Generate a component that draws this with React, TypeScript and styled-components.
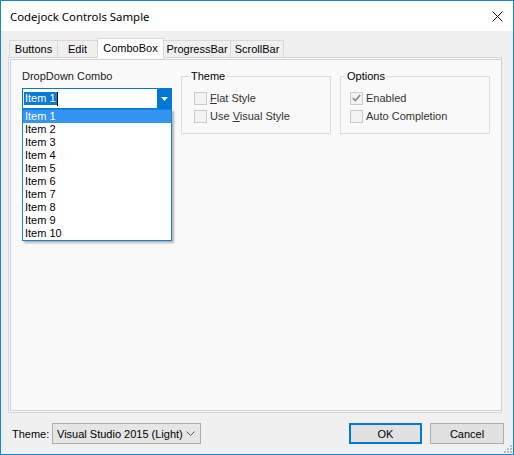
import styled, { createGlobalStyle } from "styled-components";

const GlobalStyle = createGlobalStyle`
  html, body {
    margin: 0;
    padding: 0;
    background: #ffffff;
  }
  body {
    font-family: "Liberation Sans", Arial, sans-serif;
    font-size: 11px;
    color: #000;
  }
  * {
    box-sizing: border-box;
  }
`;

const Window = styled.div`
  position: relative;
  width: 514px;
  height: 455px;
  border: 1px solid #1883d7;
  display: flex;
  flex-direction: column;
  background: #f0f0f0;
`;

const TitleBar = styled.div`
  height: 30px;
  background: #ffffff;
  display: flex;
  align-items: center;
  justify-content: space-between;
  padding: 0 10px 0 9px;
  font-family: "Noto Sans", "Open Sans", sans-serif;
  font-size: 11.4px;
  color: #000;
`;

const Body = styled.div`
  flex: 1;
  display: flex;
  flex-direction: column;
  padding: 7px 11px 10px 7px;
`;

const TabStrip = styled.div`
  height: 19px;
  display: flex;
  align-items: flex-end;
  padding-left: 1px;
`;

const Tab = styled.div<{ $w: number; $active?: boolean }>`
  position: relative;
  z-index: ${(p) => (p.$active ? 1 : 0)};
  width: ${(p) => p.$w}px;
  height: ${(p) => (p.$active ? 20 : 17)}px;
  margin-bottom: ${(p) => (p.$active ? -1 : 0)}px;
  margin-left: -1px;
  border: 1px solid #d9d9d9;
  border-bottom: none;
  background: ${(p) => (p.$active ? "#ffffff" : "#f0f0f0")};
  display: flex;
  align-items: center;
  justify-content: center;
  padding-bottom: ${(p) => (p.$active ? 2 : 0)}px;
  white-space: nowrap;

  &:first-child {
    margin-left: 0;
  }
`;

const Page = styled.div`
  height: 356px;
  border: 1px solid #d6d6d6;
  padding: 1px;
  background: #f9f9f9;
  display: flex;
`;

const PageInner = styled.div`
  flex: 1;
  border: 1px solid #d0d0d0;
  padding: 10px 11px;
  display: flex;
  align-items: flex-start;
  gap: 9px;
`;

const ComboColumn = styled.div`
  position: relative;
  width: 150px;
`;

const FieldLabel = styled.div`
  line-height: 13px;
  margin-bottom: 5px;
  color: #1a1a1a;
`;

const Combo = styled.div`
  height: 21px;
  border: 1px solid #0078d7;
  background: #ffffff;
  display: flex;
`;

const ComboText = styled.div`
  flex: 1;
  display: flex;
  align-items: center;
  padding-left: 1px;
`;

const Selected = styled.span`
  background: #0a7bd8;
  color: #ffffff;
  line-height: 13px;
  padding: 0 1px;
`;

const Caret = styled.span`
  width: 1px;
  height: 14px;
  background: #000;
`;

const ComboButton = styled.div`
  width: 14px;
  background: #0078d7;
  display: flex;
  align-items: center;
  justify-content: center;
`;

const DropList = styled.div`
  position: absolute;
  top: 39px;
  left: 0;
  width: 150px;
  border: 1px solid #1a82d6;
  background: #ffffff;
  box-shadow: 2px 2px 2px rgba(0, 0, 0, 0.28);
  z-index: 2;
`;

const ListItem = styled.div<{ $selected?: boolean }>`
  height: 13px;
  line-height: 13px;
  padding-left: 2px;
  background: ${(p) => (p.$selected ? "#3394f2" : "transparent")};
  color: ${(p) => (p.$selected ? "#ffffff" : "#000")};
`;

const Group = styled.fieldset`
  width: 150px;
  margin: 0;
  min-width: 0;
  border: 1px solid #dcdcdc;
  padding: 6px 0 8px 0;
`;

const Legend = styled.legend<{ $offset: number }>`
  margin-left: ${(p) => p.$offset}px;
  padding: 0 2px;
  line-height: 13px;
  color: #000;
`;

const GroupBody = styled.div<{ $inset: number }>`
  padding-left: ${(p) => p.$inset}px;
`;

const CheckRow = styled.div`
  height: 18px;
  display: flex;
  align-items: center;
  gap: 3px;
  color: #333333;
`;

const CheckBox = styled.span`
  width: 13px;
  height: 13px;
  border: 1px solid #cccccc;
  background: #f3f3f3;
  display: flex;
  align-items: center;
  justify-content: center;
`;

const Footer = styled.div`
  height: 21px;
  margin-top: 10px;
  margin-right: -2px;
  padding-left: 4px;
  display: flex;
  align-items: center;
`;

const FooterLabel = styled.span`
  width: 40px;
  color: #000;
`;

const ThemeSelect = styled.div`
  width: 149px;
  height: 21px;
  border: 1px solid #adadad;
  background: #e5e5e5;
  padding: 0 5px 0 4px;
  display: flex;
  align-items: center;
  justify-content: space-between;
`;

const Spacer = styled.div`
  flex: 1;
`;

const DialogButton = styled.button<{ $w: number; $default?: boolean }>`
  width: ${(p) => p.$w}px;
  height: 21px;
  margin-left: ${(p) => (p.$default ? 0 : 8)}px;
  padding: 0;
  font: inherit;
  color: #000;
  background: #e1e1e1;
  border: ${(p) => (p.$default ? "2px solid #0078d7" : "1px solid #adadad")};
`;

const Grip = styled.svg`
  position: absolute;
  right: 1px;
  bottom: 1px;
`;

const tabs = [
  { label: "Buttons", w: 49 },
  { label: "Edit", w: 41 },
  { label: "ComboBox", w: 67, active: true },
  { label: "ProgressBar", w: 68 },
  { label: "ScrollBar", w: 54 },
];

const items = Array.from({ length: 10 }, (_, i) => `Item ${i + 1}`);

const Check = ({ checked }: { checked?: boolean }) => (
  <CheckBox>
    {checked && (
      <svg width="9" height="8" viewBox="0 0 9 8">
        <path d="M0.8 4.2 L3.3 6.6 L8.2 1" fill="none" stroke="#8a8a8a" strokeWidth="1.6" />
      </svg>
    )}
  </CheckBox>
);

export default function App() {
  return (
    <>
      <GlobalStyle />
      <Window>
        <TitleBar>
          <span>Codejock Controls Sample</span>
          <svg width="11" height="11" viewBox="0 0 11 11">
            <path d="M0.5 0.5 L10.5 10.5 M10.5 0.5 L0.5 10.5" stroke="#111" strokeWidth="1" />
          </svg>
        </TitleBar>
        <Body>
          <TabStrip>
            {tabs.map((t) => (
              <Tab key={t.label} $w={t.w} $active={t.active}>
                {t.label}
              </Tab>
            ))}
          </TabStrip>
          <Page>
            <PageInner>
              <ComboColumn>
                <FieldLabel>DropDown Combo</FieldLabel>
                <Combo>
                  <ComboText>
                    <Selected>Item 1</Selected>
                    <Caret />
                  </ComboText>
                  <ComboButton>
                    <svg width="7" height="4" viewBox="0 0 7 4">
                      <path d="M0 0 H7 L3.5 4 Z" fill="#ffffff" />
                    </svg>
                  </ComboButton>
                </Combo>
                <DropList>
                  {items.map((it, i) => (
                    <ListItem key={it} $selected={i === 0}>
                      {it}
                    </ListItem>
                  ))}
                </DropList>
              </ComboColumn>

              <Group>
                <Legend $offset={7}>Theme</Legend>
                <GroupBody $inset={12}>
                  <CheckRow>
                    <Check />
                    <span>
                      <u>F</u>lat Style
                    </span>
                  </CheckRow>
                  <CheckRow>
                    <Check />
                    <span>
                      Use <u>V</u>isual Style
                    </span>
                  </CheckRow>
                </GroupBody>
              </Group>

              <Group>
                <Legend $offset={4}>Options</Legend>
                <GroupBody $inset={9}>
                  <CheckRow>
                    <Check checked />
                    <span>Enabled</span>
                  </CheckRow>
                  <CheckRow>
                    <Check />
                    <span>Auto Completion</span>
                  </CheckRow>
                </GroupBody>
              </Group>
            </PageInner>
          </Page>
          <Footer>
            <FooterLabel>Theme:</FooterLabel>
            <ThemeSelect>
              <span>Visual Studio 2015 (Light)</span>
              <svg width="9" height="5" viewBox="0 0 9 5">
                <path d="M0.5 0.5 L4.5 4.5 L8.5 0.5" fill="none" stroke="#555" strokeWidth="1" />
              </svg>
            </ThemeSelect>
            <Spacer />
            <DialogButton $w={73} $default>
              OK
            </DialogButton>
            <DialogButton $w={74}>Cancel</DialogButton>
          </Footer>
        </Body>
        <Grip width="8" height="8" viewBox="0 0 8 8">
          <rect x="6" y="0" width="2" height="2" fill="#bdbdbd" />
          <rect x="3" y="3" width="2" height="2" fill="#bdbdbd" />
          <rect x="6" y="3" width="2" height="2" fill="#bdbdbd" />
          <rect x="0" y="6" width="2" height="2" fill="#bdbdbd" />
          <rect x="3" y="6" width="2" height="2" fill="#bdbdbd" />
          <rect x="6" y="6" width="2" height="2" fill="#bdbdbd" />
        </Grip>
      </Window>
    </>
  );
}
